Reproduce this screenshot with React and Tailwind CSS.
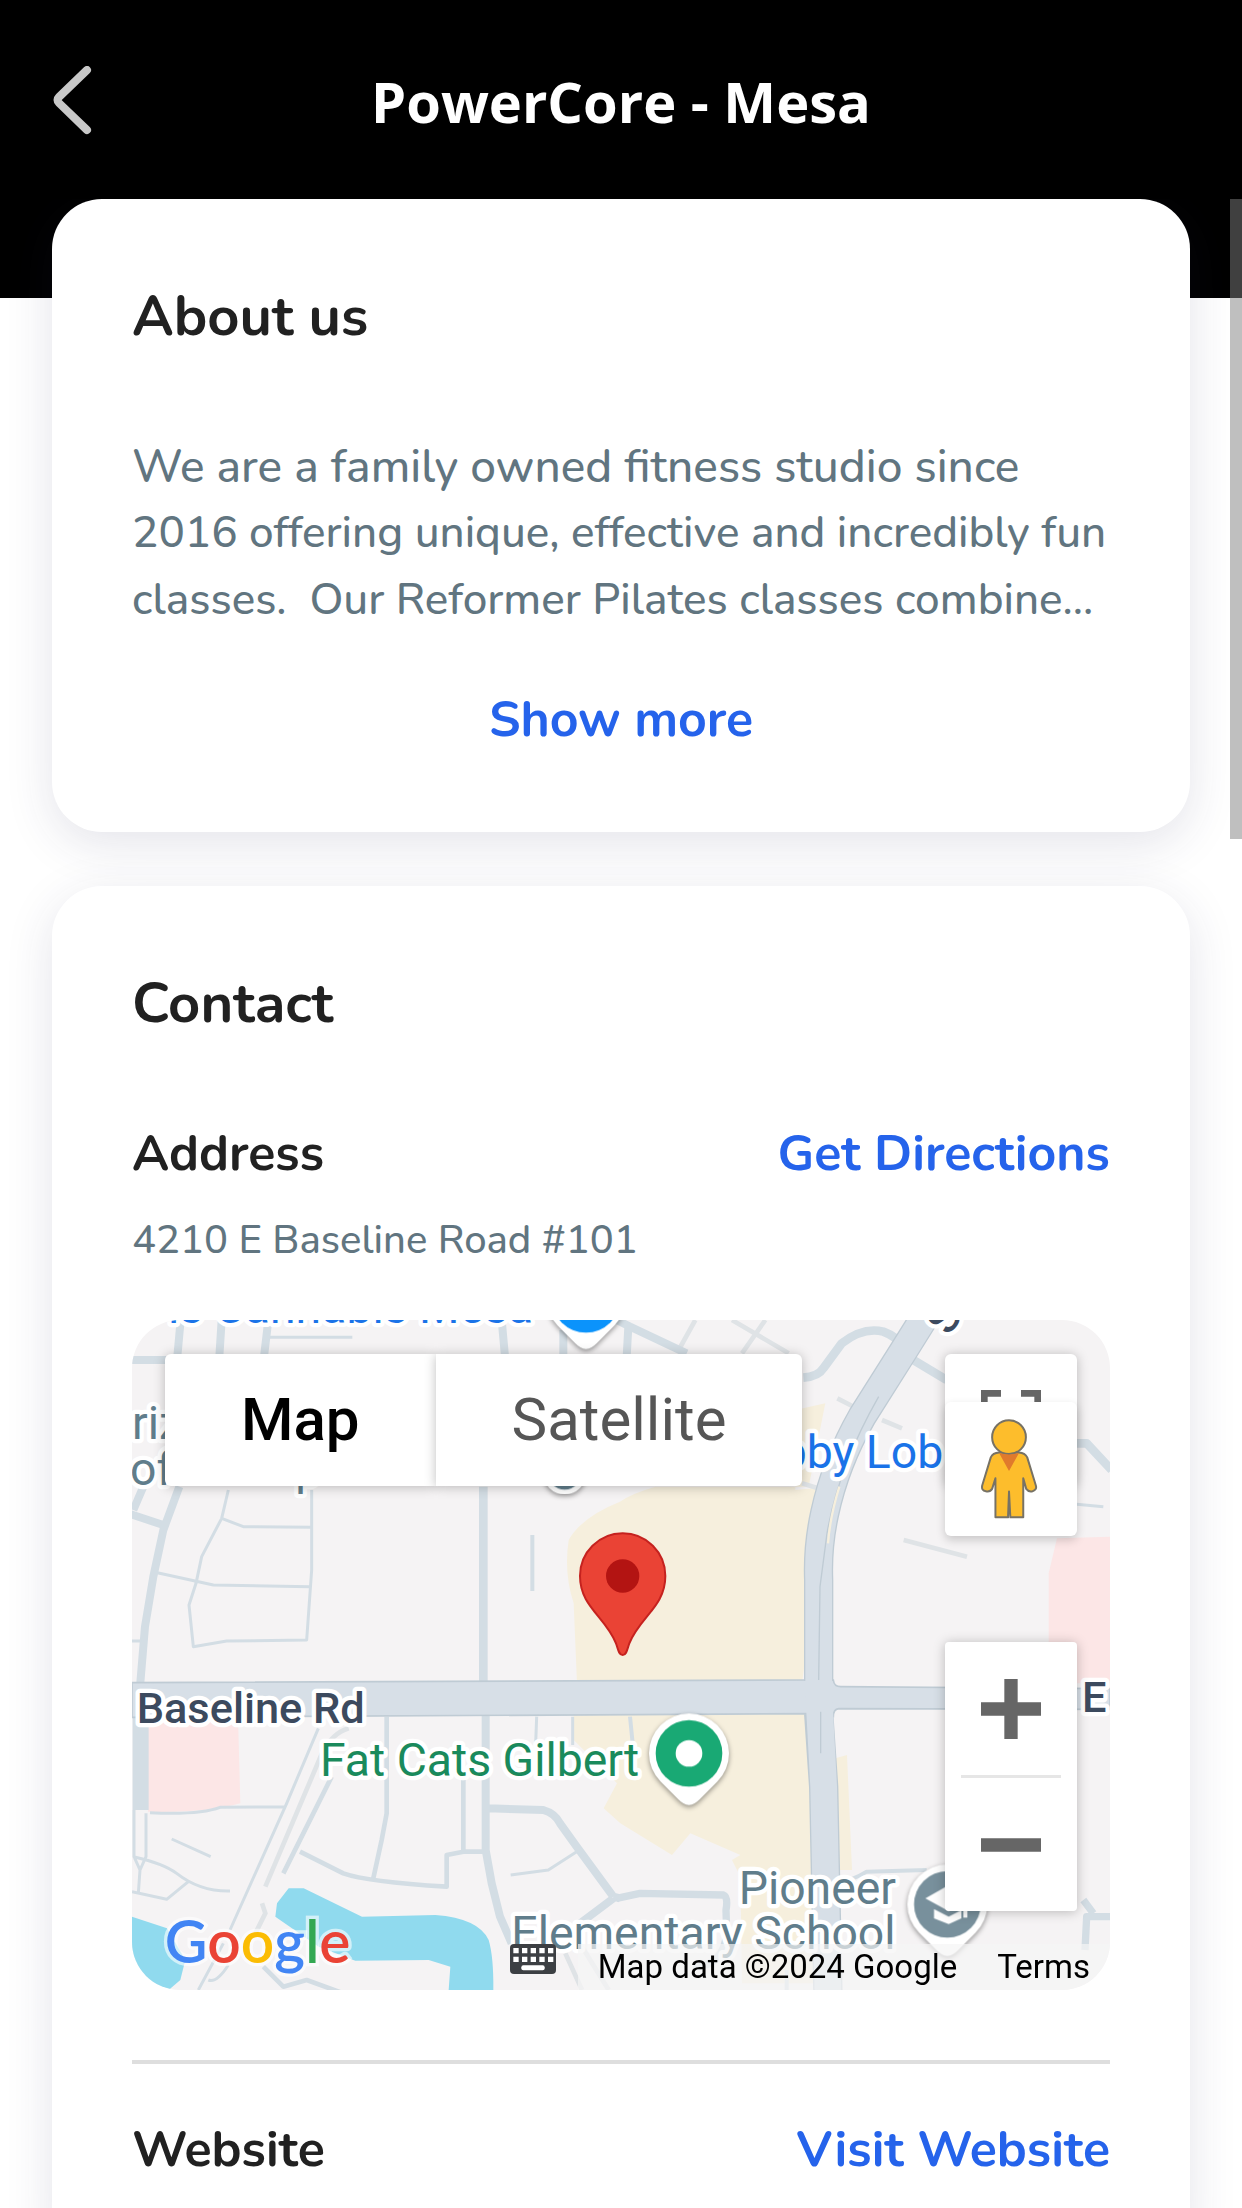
import { useState } from 'react';

const PIN = 'M0 155 C-12 155 -22 148 -32 138 L-85 85 A120 120 0 1 1 85 85 L32 138 C22 148 12 155 0 155Z';

const GOOGLE = [
  ['G', 'fill-[#4285f4]'],
  ['o', 'fill-[#ea4335]'],
  ['o', 'fill-[#fbbc04]'],
  ['g', 'fill-[#4285f4]'],
  ['l', 'fill-[#34a853]'],
  ['e', 'fill-[#ea4335]'],
];

function Card({ title, children }) {
  return (
    <section className="rounded-[50px] bg-white px-20 pt-20 pb-[78px] shadow-[0_12px_48px_rgba(50,50,90,0.13)]">
      <h2 className="text-[56px] leading-[76px] font-bold text-[#212121]">{title}</h2>
      {children}
    </section>
  );
}

function InfoRow({ label, link }) {
  return (
    <div className="flex items-center justify-between text-[50px] leading-[68px] font-bold">
      <h3 className="text-[#212121]">{label}</h3>
      <a href="#" className="text-[#2563eb]">{link}</a>
    </div>
  );
}

// Street drawing, three units per CSS pixel
function MapCanvas() {
  return (
    <svg
      viewBox="0 0 2934 2010"
      preserveAspectRatio="xMidYMid slice"
      className="absolute inset-0 h-full w-full font-[Roboto,sans-serif]"
      aria-hidden="true"
    >
      <rect width="2934" height="2010" fill="#f5f3f4" />

      {/* areas */}
      <path d="M1464 545 Q1500 520 1570 500 L2030 500 L2080 250 L1990 270 L1990 510 L2090 500 L2010 1090 L1335 1090 L1325 850 Q1295 760 1310 660 Q1350 590 1464 545Z" fill="#f6efdd" />
      <path d="M1325 1170 L2040 1170 L2060 1990 L1830 1990 L1825 1670 L1800 1620 L1825 1605 L1675 1540 L1620 1605 L1465 1510 L1415 1465 L1455 1390 L1325 1260Z" fill="#f6efdd" />
      <path d="M2110 1315 L2145 1305 L2160 1650 L2110 1650Z" fill="#f6efdd" />
      <path d="M2775 655 L2934 650 L2934 1090 L2750 1090 L2750 760Z" fill="#fce6e6" />
      <path d="M48 1190 L318 1190 L325 1450 Q220 1480 48 1475Z" fill="#fce6e6" />
      <g fill="#90daee">
        <path d="M0 1790 L105 1825 L160 1920 L145 1980 L110 2010 L0 2010Z" />
        <path d="M470 1705 L515 1705 L690 1790 L910 1785 Q1040 1795 1070 1860 Q1085 1910 1084 2010 L950 2010 L955 1940 L890 1920 L670 1922 L560 1880 L430 1790 L435 1750Z" />
      </g>

      {/* faint paths */}
      <g fill="none" stroke="#dfe3e6" strokeWidth="14">
        <path d="M1640 90 L1690 0 M1800 0 L1970 100 M1830 100 L1900 0" />
        <path d="M2116 235 L2178 267 M2250 300 L2310 325 M2315 660 L2505 710 M2010 490 L2075 510" />
        <path d="M400 1700 L570 1300 Q600 1240 650 1225 M390 1750 L400 1780 Q380 1820 370 1840" />
        <path d="M1300 1900 L1350 2010 M1350 1880 L1430 2010" />
      </g>

      {/* local streets */}
      <g fill="none" stroke="#d3dde4" strokeLinejoin="round">
        <g transform="translate(-36 -30)">
          <path strokeWidth="24" d="M30 150 H140 M182 30 L172 140 M305 30 L298 140 M445 30 L432 140 M1145 30 L1155 140 M1330 60 V140 M30 612 L130 645 M40 600 L70 530 M178 530 L130 660 L100 800 L75 950 L60 1130" />
          <path strokeWidth="9" d="M450 82 H697 M325 540 L305 625 L245 740 L228 820 L207 885 L220 1010 L320 993 L560 990 L575 780 L575 540 M305 625 L370 650 L575 652 M112 788 L280 825 L570 830 M36 993 H65" />
          <path strokeWidth="26" d="M1090 530 V1130" />
          <path strokeWidth="12" d="M1237 675 V843" />
        </g>
        <g transform="translate(1464 -30)">
          <path strokeWidth="24" d="M-10 30 L30 50 L200 130 M25 50 L20 140" />
          <path strokeWidth="26" d="M550 203 Q595 200 610 175 L665 100 Q730 50 790 65 Q830 80 850 110 M880 150 L980 210 M1360 400 L1400 400 L1475 480" />
          <path strokeWidth="9" d="M1370 583 L1450 590" />
        </g>
        <g transform="translate(-36 990)">
          <path strokeWidth="48" d="M62 200 V480" />
          <path strokeWidth="24" d="M1097 190 V600 L1115 700 L1140 800 L1175 880 M1105 475 L1270 480 Q1305 490 1320 520 L1370 590 L1480 740 M1480 740 L1500 745 M1480 745 L1380 820" />
          <path strokeWidth="14" d="M800 200 V490 L785 570 L760 685 M490 670 L635 380 M540 605 L670 670 Q740 695 980 710 L980 615 L1030 605 L1090 605 M1030 605 V380 M430 950 L490 1010 L560 990 L670 1030" />
          <path strokeWidth="9" d="M595 235 L500 460 L330 840 M310 880 L235 1020 M90 488 Q240 495 300 472 L495 470 M155 567 L272 620 M42 480 V620 L60 660 L55 730 M78 490 V620 L60 660 M40 620 Q130 640 170 670 Q240 725 330 723 M36 725 L140 748 L205 695 M1250 200 L1247 280 M1358 200 V285 M1172 675 L1285 660 L1370 605 M265 990 Q290 1000 325 945" />
        </g>
        <g transform="translate(1464 990)">
          <path strokeWidth="22" d="M-10 745 L60 730 L310 735 Q325 740 318 780 L320 850 Q310 950 220 950 M1475 800 L1400 800 L1395 900 M1390 750 L1420 790" />
          <path strokeWidth="12" d="M30 200 L38 280 M650 700 Q700 690 740 665 L920 660 M500 960 V1020" />
        </g>
      </g>

      {/* main roads */}
      <path d="M0 1088 L2034 1080 L2104 1080 Q2106 1100 2126 1100 L2934 1106 L2934 1168 L2120 1166 Q2104 1168 2104 1190 L2034 1181 L0 1192Z" fill="#d7dfe7" stroke="#bfcbd4" strokeWidth="5" />
      <g fill="none" strokeLinejoin="round">
        <path strokeWidth="88" stroke="#bfcbd4" d="M2385 -20 L2310 100 L2190 290 Q2110 430 2078 580 Q2056 680 2060 780 L2060 1082 M2060 1180 L2075 1400 L2088 2030" />
        <path strokeWidth="80" stroke="#d7dfe7" d="M2385 -20 L2310 100 L2190 290 Q2110 430 2078 580 Q2056 680 2060 780 L2060 1120 L2075 1400 L2088 2030" />
        <path strokeWidth="4" stroke="#bfcbd4" d="M2240 230 Q2120 440 2085 640 L2064 800 L2060 1080 M2066 1175 V1300" />
        <path strokeWidth="7" stroke="#f6efdd" d="M2122 500 Q2094 590 2088 670" />
      </g>

      {/* place labels */}
      <g className="stroke-white" strokeWidth="26" strokeLinejoin="round" paintOrder="stroke" fontSize="139">
        <text x="108" y="9" fill="#1a73e8">is Cannabis Mesa</text>
        <text x="0" y="358" fill="#607d8b">riz</text>
        <text x="-6" y="495" fill="#607d8b">of</text>
        <text x="490" y="495" fill="#607d8b">p</text>
        <text x="1946" y="444" fill="#1a73e8">bby Lob</text>
        <text x="564" y="1368" fill="#1a8a5c">Fat Cats Gilbert</text>
        <text x="1820" y="1752" fill="#607d8b">Pioneer</text>
        <text x="1138" y="1888" fill="#607d8b">Elementary School</text>
        <g fontSize="130" fontWeight="500" fill="#3c4a5e">
          <text x="14" y="1209">Baseline Rd</text>
          <text x="2850" y="1175">E</text>
          <text transform="translate(2455 50) rotate(-60)">S</text>
        </g>
      </g>

      {/* place pins */}
      <g className="drop-shadow-[0_6px_8px_rgba(0,0,0,0.4)]">
        <path transform="translate(1362 -68)" d={PIN} fill="#fff" />
        <circle cx="1362" cy="-65" r="103" fill="#0b93fb" />
        <circle cx="1298" cy="458" r="58" fill="#607d8b" stroke="#fff" strokeWidth="14" />
        <path transform="translate(1671 1300)" d={PIN} fill="#fff" />
        <circle cx="1671" cy="1300" r="100" fill="#19a974" />
        <circle cx="1671" cy="1300" r="40" fill="#fff" />
        <path transform="translate(2446 1753)" d={PIN} fill="#fff" />
        <circle cx="2446" cy="1753" r="100" fill="#78909c" />
        <path d="M2380 1735 L2450 1695 L2520 1735 L2450 1773Z M2406 1767 L2450 1790 L2488 1770 V1795 L2450 1812 L2406 1795Z M2494 1750 H2506 V1793 H2494Z" fill="#fff" />
      </g>

      {/* location marker */}
      <path
        d="M1472 640 A128 128 0 0 0 1344 768 C1344 860 1420 890 1452 970 C1458 986 1460 1005 1472 1005 C1484 1005 1486 986 1492 970 C1524 890 1600 860 1600 768 A128 128 0 0 0 1472 640Z"
        fill="#ea4335"
        stroke="#c5221f"
        strokeWidth="6"
      />
      <circle cx="1472" cy="768" r="50" fill="#b31412" />

      <text x="98" y="1930" fontSize="176" fontWeight="600" stroke="#fff" strokeOpacity="0.6" strokeWidth="20" paintOrder="stroke" className="font-[Lato,sans-serif]">
        {GOOGLE.map(([letter, fill], i) => (
          <tspan key={i} className={fill}>{letter}</tspan>
        ))}
      </text>
    </svg>
  );
}

function Pegman() {
  return (
    <svg viewBox="1084 326 178 308" className="h-[102px] w-[60px]" aria-hidden="true">
      <g fill="#fdbd2c" stroke="#777265" strokeWidth="6" strokeLinejoin="round">
        <path d="M1137 430 Q1118 431 1112 445 L1086 530 Q1083 545 1097 547 Q1110 550 1116 540 L1126 508 V626 H1164 L1167 548 L1171 626 H1210 V508 L1219 540 Q1226 550 1238 547 Q1252 543 1248 530 L1222 445 Q1215 431 1197 430Z" />
        <circle cx="1167" cy="384" r="51" />
      </g>
      <path d="M1137 432 Q1167 440 1197 432 L1167 486Z" fill="#e07a2c" />
    </svg>
  );
}

function KeyboardIcon() {
  return (
    <svg viewBox="0 0 138 90" className="h-[30px] w-[46px]" aria-hidden="true">
      <rect width="138" height="90" rx="12" fill="#3c3f43" />
      <path
        d="M10 12h16v16H10z M36 12h16v16H36z M62 12h16v16H62z M88 12h16v16H88z M114 12h16v16h-16z M10 38h16v16H10z M36 38h16v16H36z M62 38h16v16H62z M88 38h16v16H88z M114 38h16v16h-16z"
        fill="#fff"
      />
      <rect x="34" y="64" width="70" height="15" rx="6" fill="#fff" />
    </svg>
  );
}

function LocationMap() {
  const [mapType, setMapType] = useState('map');

  return (
    <div className="relative h-[670px] overflow-hidden rounded-[48px] font-[Roboto,sans-serif]">
      <MapCanvas />

      <div className="absolute top-[34px] left-[33px] flex h-[132px] text-6xl">
        <button
          onClick={() => setMapType('map')}
          className={`rounded-l-md bg-white px-[76px] shadow-[0_1px_12px_rgba(0,0,0,0.25)] ${mapType === 'map' ? 'font-medium text-black' : 'text-[#565656]'}`}
        >
          Map
        </button>
        <button
          onClick={() => setMapType('satellite')}
          className={`rounded-r-md bg-white px-[76px] shadow-[0_1px_12px_rgba(0,0,0,0.25)] ${mapType === 'satellite' ? 'font-medium text-black' : 'text-[#565656]'}`}
        >
          Satellite
        </button>
      </div>

      <button aria-label="Toggle fullscreen view" className="absolute top-[34px] right-[33px] flex size-[132px] items-center justify-center rounded-md bg-white shadow-[0_1px_12px_rgba(0,0,0,0.25)]">
        <svg viewBox="0 0 18 18" className="size-[60px]" fill="#666" aria-hidden="true">
          <path d="M0 0v6h2V2h4V0H0z M16 0h-4v2h4v4h2V0h-2z M16 16h-4v2h6v-6h-2v4z M2 12H0v6h6v-2H2v-4z" />
        </svg>
      </button>
      <button aria-label="Drag Pegman onto the map to open Street View" className="absolute top-[82px] right-[33px] flex h-[134px] w-[132px] items-center justify-center rounded-md bg-white shadow-[0_4px_10px_rgba(0,0,0,0.18)]">
        <Pegman />
      </button>

      <div className="absolute right-[33px] bottom-[79px] flex w-[132px] flex-col items-center rounded-sm bg-white shadow-[0_1px_12px_rgba(0,0,0,0.25)]">
        <button aria-label="Zoom in" className="flex h-[133px] w-full items-center justify-center">
          <svg viewBox="0 0 18 18" className="size-[60px]" fill="#666" aria-hidden="true">
            <path d="M18 7h-7V0H7v7H0v4h7v7h4v-7h7z" />
          </svg>
        </button>
        <div className="h-[3px] w-[100px] bg-[#e6e6e6]" />
        <button aria-label="Zoom out" className="flex h-[133px] w-full items-center justify-center">
          <svg viewBox="0 0 18 18" className="size-[60px]" fill="#666" aria-hidden="true">
            <path d="M0 7h18v4H0z" />
          </svg>
        </button>
      </div>

      <div className="absolute right-0 bottom-0 flex h-[46px] items-start text-[33px] leading-[46px] text-black">
        <button aria-label="Keyboard shortcuts" className="mr-[22px]">
          <KeyboardIcon />
        </button>
        <span className="bg-[#f5f5f5]/70 px-5">Map data ©2024 Google</span>
        <a href="#" className="bg-[#f5f5f5]/70 px-5">Terms</a>
      </div>
    </div>
  );
}

export default function App() {
  return (
    <div className="relative flex h-screen flex-col overflow-hidden bg-white font-[Nunito,Lato,sans-serif]">
      <header className="grid h-[199px] shrink-0 grid-cols-[1fr_auto_1fr] items-center bg-black px-[52px] pt-0.5 font-['Open_Sans',sans-serif]">
        <button aria-label="Back" className="justify-self-start">
          <svg viewBox="0 0 40 70" className="h-[70px] w-10" fill="none" stroke="#c8c8c8" strokeWidth="8" strokeLinecap="round" strokeLinejoin="round" aria-hidden="true">
            <path d="M35 4 L7 31 Q4 34 7 37 L35 64" />
          </svg>
        </button>
        <h1 className="text-[56px] leading-[76px] font-bold text-white">PowerCore - Mesa</h1>
      </header>

      <main className="relative min-h-0 flex-1 overflow-hidden">
        <div className="absolute inset-x-0 top-0 h-[99px] bg-black" />
        <div className="relative flex flex-col gap-[54px] px-[52px]">
          <Card title="About us">
            <p className="mt-[78px] text-[44px] leading-[67px] font-medium whitespace-pre-wrap text-[#617580] first-line:text-[46px]">
              We are a family owned fitness studio since 2016 offering unique, effective and incredibly fun classes.{'  '}Our Reformer Pilates classes combine...
            </p>
            <button className="mx-auto mt-[52px] block text-[50px] leading-[68px] font-bold text-[#2563eb]">Show more</button>
          </Card>

          <Card title="Contact">
            <div className="mt-[78px]">
              <InfoRow label="Address" link="Get Directions" />
              <p className="mt-6 mb-[52px] text-[40px] leading-[56px] font-medium text-[#617580]">4210 E Baseline Road #101</p>
            </div>
            <LocationMap />
            <hr className="mt-[70px] mb-[52px] border-t-4 border-[#dedede]" />
            <InfoRow label="Website" link="Visit Website" />
          </Card>
        </div>
        <div className="absolute top-0 right-0 h-[640px] w-3 bg-[#808080]/50" />
      </main>
    </div>
  );
}
